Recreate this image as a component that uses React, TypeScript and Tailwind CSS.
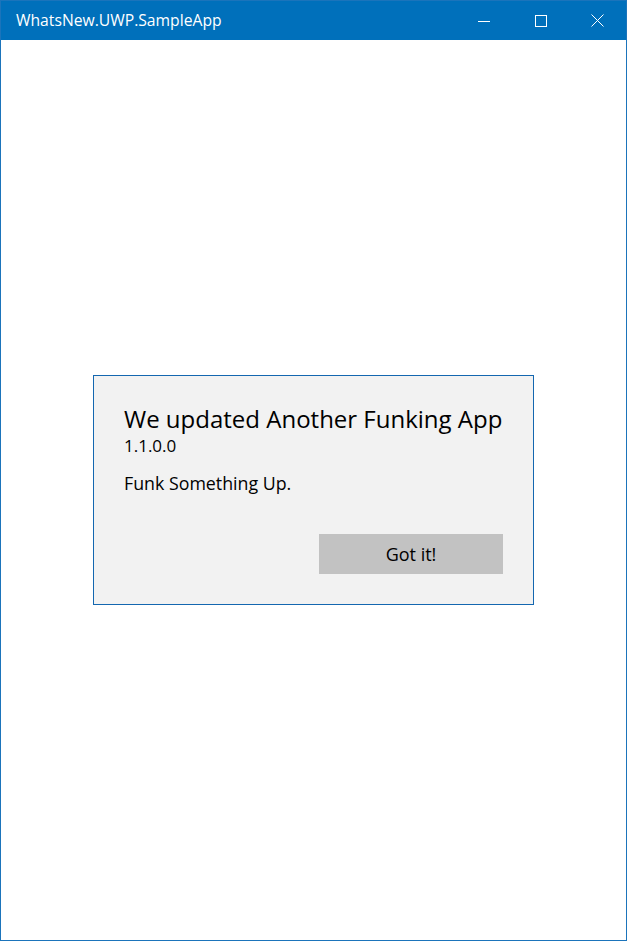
import React from "react";

export default function App() {
  const font = { fontFamily: '"Open Sans", "Noto Sans", sans-serif' };
  return (
    <div className="w-[627px] h-[941px] flex flex-col border border-[#1b74bb] bg-white overflow-hidden" style={font}>
      <div className="h-[39px] shrink-0 bg-[#0070bb] flex items-center text-white">
        <div className="pl-[15px] text-[15.7px] flex-1 leading-none">WhatsNew.UWP.SampleApp</div>
        <div className="flex h-full">
          <div className="w-[57px] h-full flex items-center justify-center">
            <svg width="12" height="12" viewBox="0 0 12 12"><path d="M0 6.5 H12" stroke="white" strokeWidth="1" /></svg>
          </div>
          <div className="w-[57px] h-full flex items-center justify-center">
            <svg width="12" height="12" viewBox="0 0 12 12"><rect x="0.5" y="0.5" width="11" height="11" fill="none" stroke="white" strokeWidth="1" /></svg>
          </div>
          <div className="w-[57px] h-full flex items-center justify-center">
            <svg width="13" height="13" viewBox="0 0 13 13"><path d="M0.5 0.5 L12.5 12.5 M12.5 0.5 L0.5 12.5" stroke="white" strokeWidth="1" /></svg>
          </div>
        </div>
      </div>
      <div className="flex-1 flex items-center justify-center">
        <div className="w-[441px] h-[230px] border border-[#1467b0] bg-[#f2f2f2] flex flex-col p-[30px] pt-[27px] text-black">
          <div className="text-[24px] leading-[32px]">We updated Another Funking App</div>
          <div className="text-[17px] leading-[22px]">1.1.0.0</div>
          <div className="text-[17.8px] leading-[22px] mt-[15px]">Funk Something Up.</div>
          <div className="mt-auto flex justify-end">
            <div className="w-[184px] h-[40px] bg-[#c2c2c2] flex items-center justify-center text-[18px]">Got it!</div>
          </div>
        </div>
      </div>
    </div>
  );
}
